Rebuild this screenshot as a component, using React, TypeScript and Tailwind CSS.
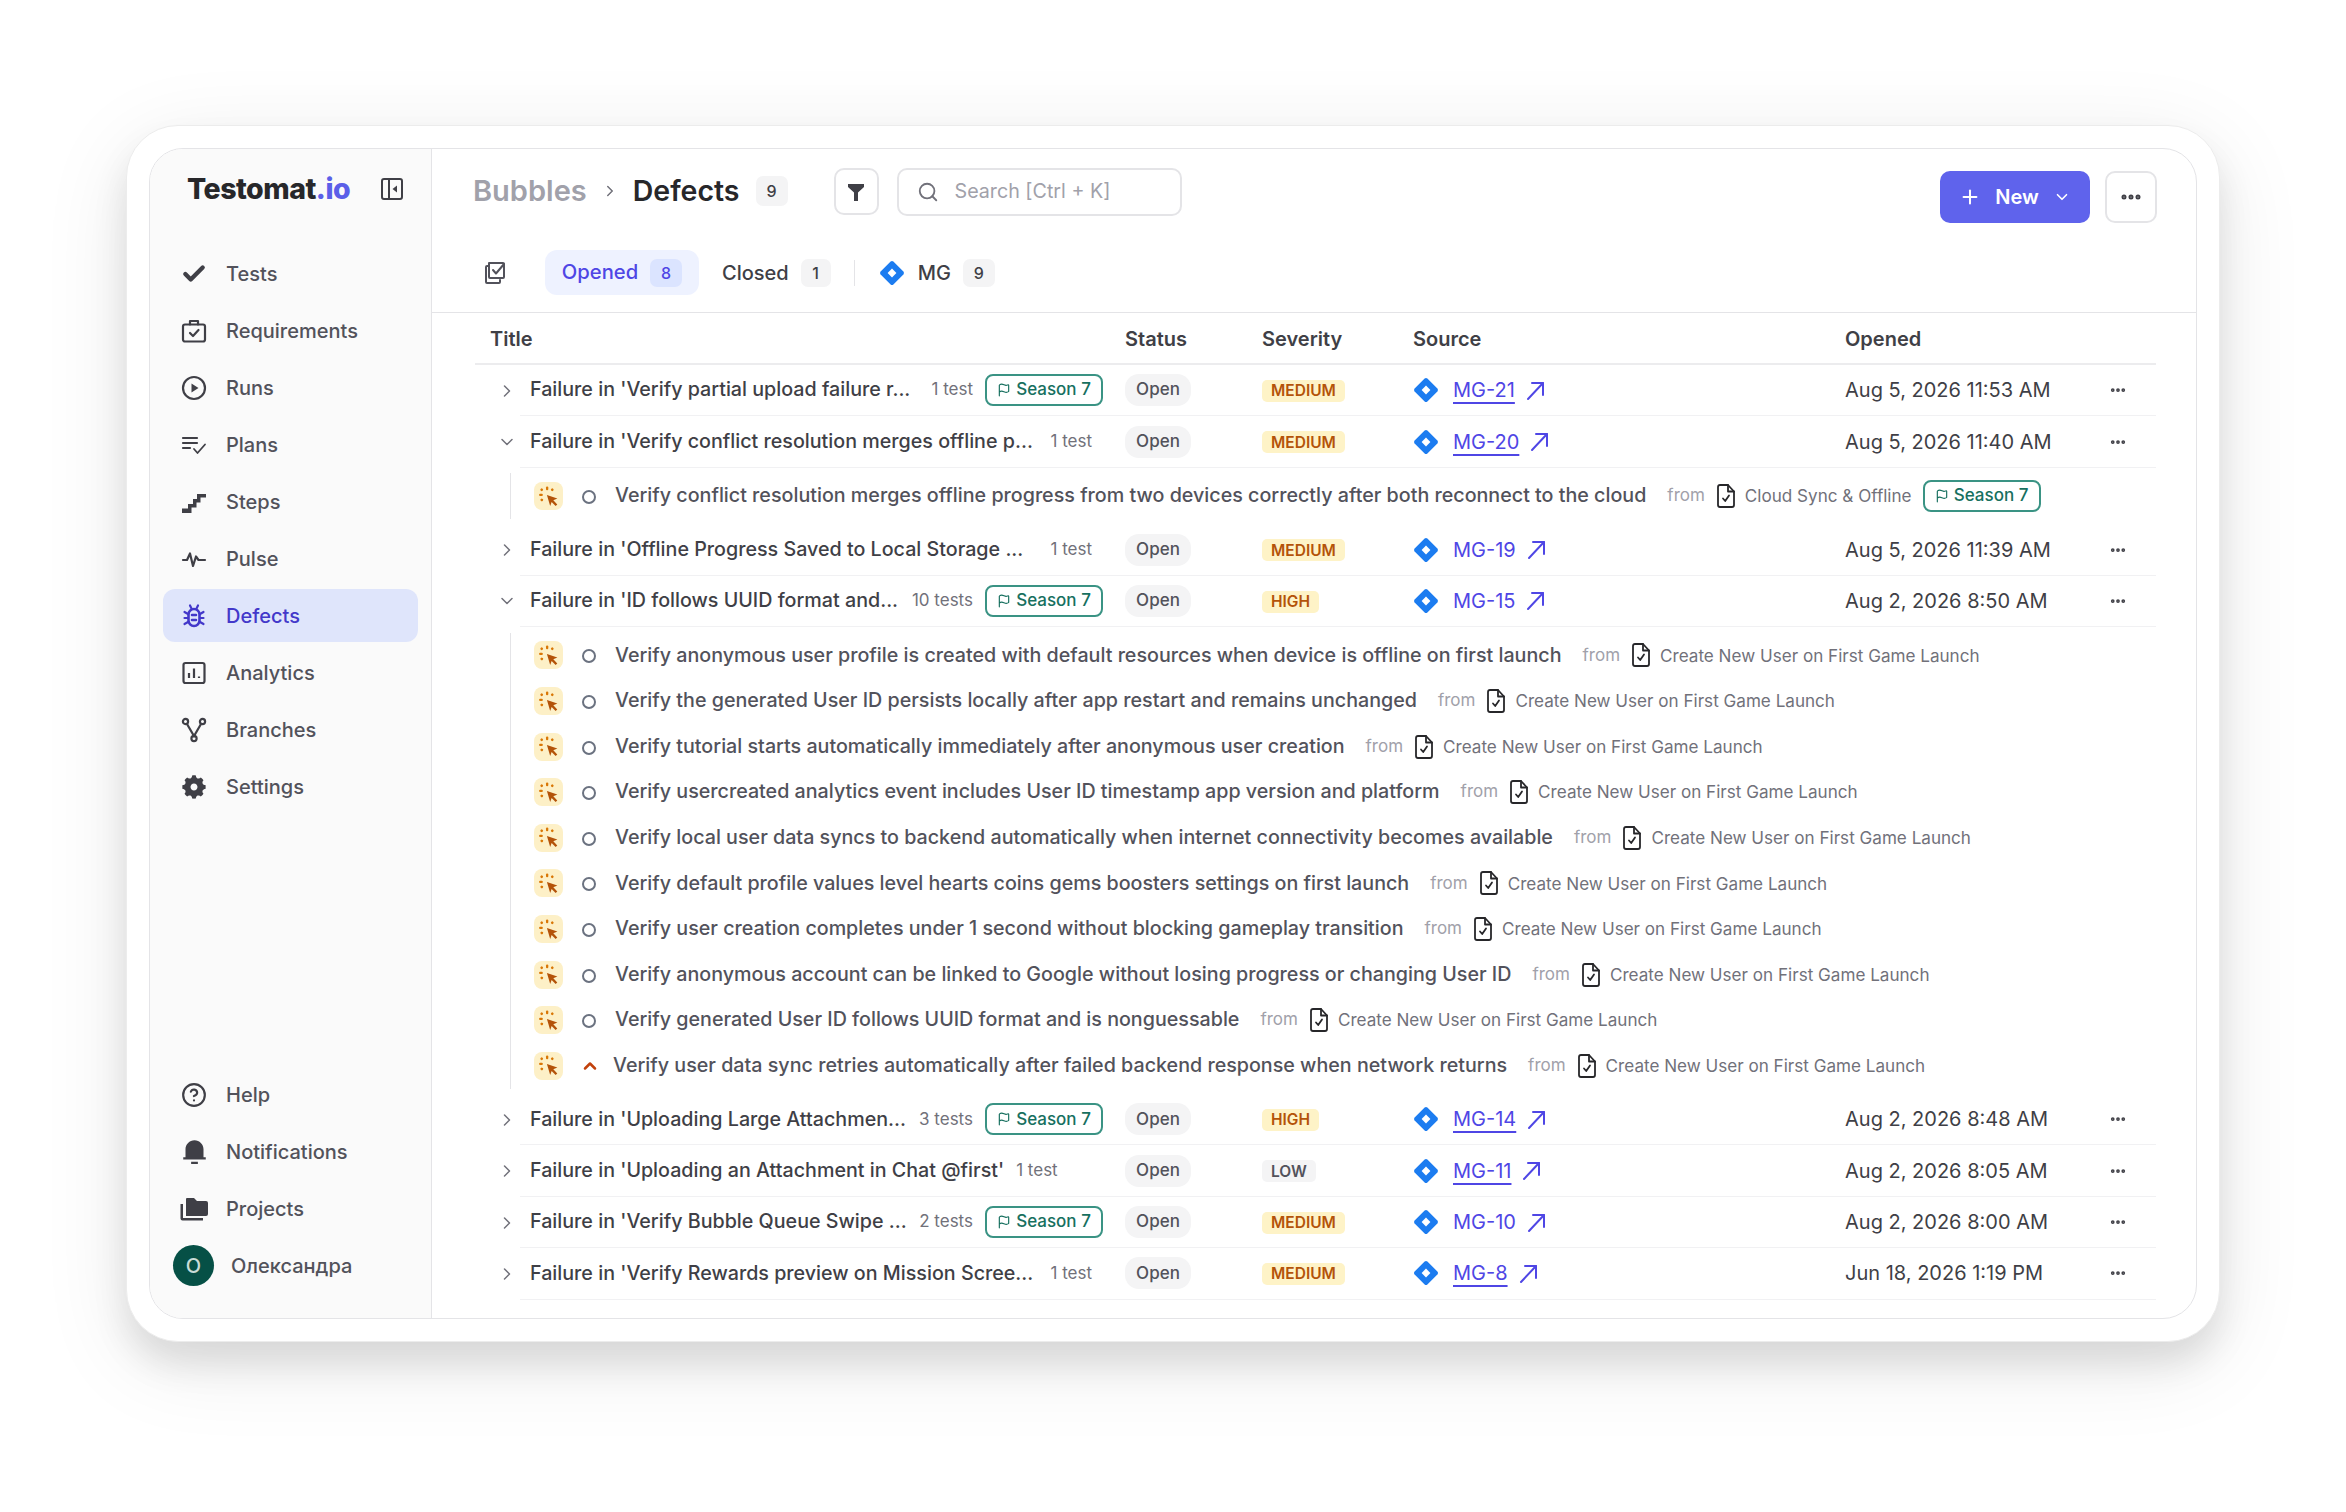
import React from 'react';
import { Check, CircleHelp, ChevronRight, ChevronDown, ChevronUp, Plus, Search, Ellipsis, Flag } from 'lucide-react';
import { RiNotification3Fill, RiSettings5Fill } from 'react-icons/ri';

type Defect = {
  title: string;
  tests: string;
  tag?: boolean;
  tight?: boolean;
  severity: 'MEDIUM' | 'HIGH' | 'LOW';
  source: string;
  underline: boolean;
  opened: string;
  open?: boolean;
  subs?: { title: string; from: string; tag?: boolean; last?: boolean }[];
};

const launch = 'Create New User on First Game Launch';

const defects: Defect[] = [
  { title: "Failure in 'Verify partial upload failure r...", tests: '1 test', tag: true, severity: 'MEDIUM', source: 'MG-21', underline: true, opened: 'Aug 5, 2026 11:53 AM' },
  {
    title: "Failure in 'Verify conflict resolution merges offline p...", tests: '1 test', severity: 'MEDIUM', source: 'MG-20', underline: true, opened: 'Aug 5, 2026 11:40 AM', open: true,
    subs: [{ title: 'Verify conflict resolution merges offline progress from two devices correctly after both reconnect to the cloud', from: 'Cloud Sync & Offline', tag: true }],
  },
  { title: "Failure in 'Offline Progress Saved to Local Storage ...", tests: '1 test', severity: 'MEDIUM', source: 'MG-19', underline: false, opened: 'Aug 5, 2026 11:39 AM' },
  {
    title: "Failure in 'ID follows UUID format and...", tests: '10 tests', tag: true, severity: 'HIGH', source: 'MG-15', underline: false, opened: 'Aug 2, 2026 8:50 AM', open: true,
    subs: [
      { title: 'Verify anonymous user profile is created with default resources when device is offline on first launch', from: launch },
      { title: 'Verify the generated User ID persists locally after app restart and remains unchanged', from: launch },
      { title: 'Verify tutorial starts automatically immediately after anonymous user creation', from: launch },
      { title: 'Verify usercreated analytics event includes User ID timestamp app version and platform', from: launch },
      { title: 'Verify local user data syncs to backend automatically when internet connectivity becomes available', from: launch },
      { title: 'Verify default profile values level hearts coins gems boosters settings on first launch', from: launch },
      { title: 'Verify user creation completes under 1 second without blocking gameplay transition', from: launch },
      { title: 'Verify anonymous account can be linked to Google without losing progress or changing User ID', from: launch },
      { title: 'Verify generated User ID follows UUID format and is nonguessable', from: launch },
      { title: 'Verify user data sync retries automatically after failed backend response when network returns', from: launch, last: true },
    ],
  },
  { title: "Failure in 'Uploading Large Attachmen...", tests: '3 tests', tag: true, severity: 'HIGH', source: 'MG-14', underline: true, opened: 'Aug 2, 2026 8:48 AM' },
  { title: "Failure in 'Uploading an Attachment in Chat @first'", tests: '1 test', tight: true, severity: 'LOW', source: 'MG-11', underline: true, opened: 'Aug 2, 2026 8:05 AM' },
  { title: "Failure in 'Verify Bubble Queue Swipe ...", tests: '2 tests', tag: true, severity: 'MEDIUM', source: 'MG-10', underline: false, opened: 'Aug 2, 2026 8:00 AM' },
  { title: "Failure in 'Verify Rewards preview on Mission Scree...", tests: '1 test', severity: 'MEDIUM', source: 'MG-8', underline: true, opened: 'Jun 18, 2026 1:19 PM' },
];

const JiraIcon = ({ size = 26 }: { size?: number }) => (
  <svg width={size} height={size} viewBox="0 0 26 26" className="shrink-0">
    <path d="M11.6 1.6 Q13 0.4 14.4 1.6 L24.4 11.6 Q25.6 13 24.4 14.4 L14.4 24.4 Q13 25.6 11.6 24.4 L1.6 14.4 Q0.4 13 1.6 11.6 Z" fill="#1c7cf0" />
    <path d="M13 8.6 L17.4 13 L13 17.4 L8.6 13 Z" fill="#fff" />
  </svg>
);

const ExternalArrow = () => (
  <svg width="21" height="21" viewBox="0 0 21 21" fill="none" stroke="#4f46e5" strokeWidth="2" strokeLinecap="round" strokeLinejoin="round" className="ml-[10px] shrink-0">
    <path d="M3 19 L18 3" />
    <path d="M7 3 H18 V15" />
  </svg>
);

const ClickIcon = () => (
  <div className="w-[29px] h-[28px] rounded-[8px] bg-[#fdf0c7] flex items-center justify-center shrink-0">
    <svg width="23" height="23" viewBox="0 0 22 22" fill="#b45309">
      <path d="M9.5 9.5 L19.5 13 L15.6 14.6 L19.4 18.6 L17.8 20 L14 16.2 L12.6 20 Z" />
      <rect x="8.6" y="1.5" width="2.2" height="3.6" rx="1" fill="#d97706" />
      <rect x="2" y="8.4" width="3.6" height="2.2" rx="1" fill="#d97706" />
      <rect x="3.3" y="3.3" width="2.5" height="2.5" rx="1.1" transform="rotate(45 4.5 4.5)" fill="#d97706" />
      <rect x="13.4" y="3.3" width="2.5" height="2.5" rx="1.1" transform="rotate(45 14.6 4.5)" fill="#d97706" />
      <rect x="3.4" y="13" width="2.5" height="2.5" rx="1.1" transform="rotate(45 4.6 14.2)" fill="#d97706" />
    </svg>
  </div>
);

const DocIcon = () => (
  <svg width="20" height="26" viewBox="0 0 20 26" fill="none" stroke="#27272a" strokeWidth="1.8" strokeLinejoin="round" strokeLinecap="round" className="shrink-0">
    <path d="M4 2 H12 L18 8.5 V22 Q18 24 16 24 H4 Q2 24 2 22 V4 Q2 2 4 2 Z" />
    <path d="M12 2 V8.5 H18" />
    <path d="M7 15.5 L9.2 18 L13 12.5" />
  </svg>
);

const SeasonTag = () => (
  <span className="inline-flex items-center justify-center gap-[5px] w-[118px] h-[32px] rounded-[8px] border-2 border-[#3a9384] text-[#17705f] text-[17px] font-medium shrink-0">
    <Flag size={14} strokeWidth={2} />
    Season 7
  </span>
);

const severityClass = {
  MEDIUM: 'bg-[#fef3c7] text-[#b45309]',
  HIGH: 'bg-[#fef3c7] text-[#b45309]',
  LOW: 'bg-[#f4f4f5] text-[#52525b]',
};

const navIconClass = 'w-[26px] h-[26px] flex items-center justify-center [&>svg]:shrink-0';

const navTop = [
  { label: 'Tests', icon: <Check size={26} strokeWidth={4} /> },
  {
    label: 'Requirements',
    icon: (
      <svg width="26" height="26" viewBox="0 0 26 26" fill="none" stroke="currentColor" strokeWidth="2.2" strokeLinejoin="round" strokeLinecap="round">
        <rect x="2" y="6.5" width="22" height="17" rx="2" />
        <path d="M9 6.5 V3 H17 V6.5" />
        <path d="M9 15 L12 18 L17.5 12" />
      </svg>
    ),
  },
  {
    label: 'Runs',
    icon: (
      <svg width="26" height="26" viewBox="0 0 26 26" fill="none" stroke="currentColor" strokeWidth="2.2">
        <circle cx="13" cy="13" r="11" />
        <path d="M10.5 8.5 L17.5 13 L10.5 17.5 Z" fill="currentColor" stroke="none" />
      </svg>
    ),
  },
  {
    label: 'Plans',
    icon: (
      <svg width="26" height="26" viewBox="0 0 26 26" fill="none" stroke="currentColor" strokeWidth="2.2" strokeLinecap="round" strokeLinejoin="round">
        <path d="M2 6 H16 M2 11 H16 M2 16 H9" />
        <path d="M13 17 L16.5 21 L24 12.5" strokeWidth="1.8" />
      </svg>
    ),
  },
  {
    label: 'Steps',
    icon: (
      <svg width="26" height="26" viewBox="0 0 26 26" fill="currentColor">
        <path d="M1 24 V19.5 H7 V15 H12 V10 H16 V5 H25 V8.5 H19.5 V13.5 H15.5 V18.5 H10.5 V24 Z" />
      </svg>
    ),
  },
  {
    label: 'Pulse',
    icon: (
      <svg width="26" height="26" viewBox="0 0 26 26" fill="none" stroke="currentColor" strokeWidth="2.2" strokeLinecap="round" strokeLinejoin="round">
        <path d="M2 14 H6 L9 7.5 L12 20 L15 10.5 L17.5 14 H24" />
      </svg>
    ),
  },
  {
    label: 'Defects',
    active: true,
    icon: (
      <svg width="26" height="26" viewBox="0 0 26 26" fill="none" stroke="currentColor" strokeWidth="2.6" strokeLinecap="round">
        <rect x="7.5" y="6" width="11" height="17" rx="5.5" />
        <path d="M11 12 H15 M11 17 H15" />
        <path d="M9 2.5 L10.5 5.5 M17 2.5 L15.5 5.5 M3.5 9 L7 11 M22.5 9 L19 11 M3.5 15 H7 M22.5 15 H19 M3.5 21 L7 19 M22.5 21 L19 19" strokeWidth="2.2" />
      </svg>
    ),
  },
  {
    label: 'Analytics',
    icon: (
      <svg width="26" height="26" viewBox="0 0 26 26" fill="none" stroke="currentColor" strokeWidth="2.2">
        <rect x="2.5" y="3" width="21" height="20" rx="2" />
        <path d="M8 18 V13 M13 18 V8.5 M18 18 V16.5" />
      </svg>
    ),
  },
  {
    label: 'Branches',
    icon: (
      <svg width="26" height="26" viewBox="0 0 26 26" fill="none" stroke="currentColor" strokeWidth="2.2" strokeLinecap="round">
        <circle cx="4.5" cy="4.5" r="2.6" />
        <circle cx="21.5" cy="4.5" r="2.6" />
        <circle cx="13" cy="21.5" r="2.6" />
        <path d="M6 7 L13 19 L20 7" />
      </svg>
    ),
  },
  { label: 'Settings', icon: <RiSettings5Fill size={28} /> },
];

const navBottom = [
  { label: 'Help', icon: <CircleHelp size={26} strokeWidth={2} /> },
  { label: 'Notifications', icon: <RiNotification3Fill size={27} /> },
  {
    label: 'Projects',
    icon: (
      <svg width="30" height="26" viewBox="0 0 30 26" fill="currentColor">
        <path d="M7 3 Q7 2 8 2 H15 L18 5 H27 Q29 5 29 7 V18 Q29 20 27 20 H7 Z" />
        <path d="M1.5 8 H4 V22 H24 V24.5 H3.5 Q1.5 24.5 1.5 22.5 Z" />
      </svg>
    ),
  },
];

const NavItem = ({ label, icon, active }: { label: string; icon: React.ReactNode; active?: boolean }) => (
  <div className={`h-[53px] rounded-[12px] flex items-center pl-[18px] gap-[19px] text-[20px] font-medium ${active ? 'bg-[#dfe5fb] text-[#4338ca]' : 'text-[#52525b]'}`}>
    <span className={`${navIconClass} ${active ? 'text-[#4338ca]' : 'text-[#3f3f46]'}`}>{icon}</span>
    {label}
  </div>
);

const Sidebar = () => (
  <aside className="w-[282px] shrink-0 bg-[#fafafa] border-r border-[#e4e4e7] flex flex-col pb-[26px]">
    <div className="h-[80px] pl-[37px] pr-[28px] flex items-center justify-between">
      <span className="text-[28.5px] font-extrabold tracking-[-0.5px] text-[#27272a]">
        Testomat<span className="text-[#5b5fe8]">.io</span>
      </span>
      <svg width="22" height="22" viewBox="0 0 22 22" fill="none" stroke="#3f3f46" strokeWidth="2">
        <rect x="1" y="1" width="20" height="20" rx="2" />
        <path d="M8 1 V21" />
        <path d="M16 7.5 L11.5 11 L16 14.5 Z" fill="#3f3f46" stroke="none" />
      </svg>
    </div>
    <nav className="mt-[18px] pl-[13px] pr-[13px] flex flex-col gap-[4px]">
      {navTop.map(item => (
        <NavItem key={item.label} {...item} />
      ))}
    </nav>
    <div className="mt-auto pl-[13px] pr-[13px] flex flex-col gap-[4px]">
      {navBottom.map(item => (
        <NavItem key={item.label} {...item} />
      ))}
      <div className="h-[53px] flex items-center pl-[10px] gap-[17px] text-[20px] font-medium text-[#52525b]">
        <span className="w-[41px] h-[41px] rounded-full bg-[#065046] text-[#c9dcd7] flex items-center justify-center">O</span>
        Олександра
      </div>
    </div>
  </aside>
);

const Count = ({ value, className }: { value: number; className: string }) => (
  <span className={`h-[28px] rounded-[7px] flex items-center justify-center text-[16px] font-medium ${className}`}>{value}</span>
);

const Header = () => (
  <header className="h-[101px] pl-[41px] pr-[39px] flex justify-between">
    <div className="flex items-start pt-[19px]">
      <div className="h-[46px] flex items-center">
        <span className="text-[29px] font-semibold text-[#a1a1aa]">Bubbles</span>
        <ChevronRight size={18} className="text-[#71717a] mx-[14px]" />
        <span className="text-[28.5px] font-semibold text-[#27272a]">Defects</span>
        <Count value={9} className="ml-[16px] w-[32px] h-[30px] bg-[#f4f4f5] text-[#3f3f46]" />
      </div>
      <button className="ml-[46px] w-[45px] h-[47px] rounded-[10px] border-2 border-[#e4e4e7] flex items-center justify-center text-[#3f3f46]">
        <svg width="18" height="20" viewBox="0 0 18 20" fill="currentColor">
          <path d="M1 2 H17 V5 L11 10.5 V19 H7 V10.5 L1 5 Z" />
        </svg>
      </button>
      <div className="ml-[18px] w-[285px] h-[48px] rounded-[10px] border-2 border-[#e4e4e7] flex items-center pl-[18px] gap-[16px] text-[19.7px] text-[#a1a1aa]">
        <Search size={22} className="text-[#71717a]" />
        Search [Ctrl + K]
      </div>
    </div>
    <div className="flex items-start pt-[22px] gap-[15px]">
      <button className="w-[150px] h-[52px] rounded-[10px] bg-[#5f63ec] text-white flex items-center justify-center gap-[14px] text-[20px] font-semibold">
        <Plus size={22} strokeWidth={2.2} />
        New
        <ChevronDown size={18} strokeWidth={2.2} />
      </button>
      <button className="w-[52px] h-[52px] rounded-[10px] border-2 border-[#e4e4e7] flex items-center justify-center text-[#3f3f46]">
        <Ellipsis size={24} strokeWidth={3} />
      </button>
    </div>
  </header>
);

const Tabs = () => (
  <div className="h-[63px] border-b border-[#e4e4e7] pl-[52px] flex items-start">
    <svg width="22" height="24" viewBox="0 0 22 24" fill="none" stroke="#52525b" strokeWidth="2" strokeLinecap="round" strokeLinejoin="round" className="mt-[11px]">
      <path d="M5 5 H3 Q2 5 2 6 V21 Q2 22 3 22 H15 Q16 22 16 21 V19" />
      <path d="M5 2 H19 Q20 2 20 3 V16 Q20 17 19 17 H6 Q5 17 5 16 Z" />
      <path d="M9 9 L12 12.5 L20 3" />
    </svg>
    <div className="ml-[39px] w-[154px] h-[45px] rounded-[12px] bg-[#eef2ff] flex items-center justify-center gap-[12px] text-[20.2px] font-medium text-[#4f46e5]">
      Opened
      <Count value={8} className="w-[32px] bg-[#dbe4ff] text-[#4f46e5]" />
    </div>
    <div className="ml-[23px] h-[45px] flex items-center gap-[12px] text-[20px] font-medium text-[#3f3f46]">
      Closed
      <Count value={1} className="w-[30px] bg-[#f4f4f5] text-[#3f3f46]" />
    </div>
    <div className="ml-[23px] mt-[10px] w-px h-[26px] bg-[#e4e4e7]" />
    <div className="ml-[24px] h-[45px] flex items-center text-[20px] font-medium text-[#3f3f46]">
      <JiraIcon />
      <span className="ml-[13px]">MG</span>
      <Count value={9} className="ml-[12px] w-[32px] bg-[#f4f4f5] text-[#3f3f46]" />
    </div>
  </div>
);

const rowGrid = 'grid grid-cols-[605px_137px_151px_432px_1fr_56px] items-center';

const Row = ({ d }: { d: Defect }) => (
  <div className="flex h-[51.4px]">
    <div className="w-[45px] flex items-center justify-center pl-[18px] text-[#71717a]">
      {d.open ? <ChevronDown size={20} strokeWidth={1.8} /> : <ChevronRight size={20} strokeWidth={1.8} />}
    </div>
    <div className={`flex-1 border-b border-[#f1f1f3] ${rowGrid}`}>
      <div className={`pl-[10px] flex items-center whitespace-nowrap ${d.tag ? 'pr-[22px]' : 'pr-[33px]'}`}>
        <span className="text-[19.7px] font-medium text-[#3f3f46]">{d.title}</span>
        <span className={`text-[17px] text-[#71717a] ${d.tight ? 'ml-[12px]' : 'ml-auto'}`}>{d.tests}</span>
        {d.tag && <span className="ml-[12px]"><SeasonTag /></span>}
      </div>
      <div>
        <span className="inline-flex items-center justify-center w-[66px] h-[32px] rounded-[14px] bg-[#f4f4f5] text-[17px] font-medium text-[#52525b]">Open</span>
      </div>
      <div>
        <span className={`inline-flex items-center h-[22px] px-[9px] rounded-[5px] text-[15.5px] leading-none font-semibold ${severityClass[d.severity]}`}>{d.severity}</span>
      </div>
      <div className="flex items-center">
        <JiraIcon />
        <span className={`ml-[14px] text-[20px] text-[#4f46e5] ${d.underline ? 'underline underline-offset-[5px]' : ''}`}>{d.source}</span>
        <ExternalArrow />
      </div>
      <div className="text-[20px] text-[#3f3f46] whitespace-nowrap">{d.opened}</div>
      <div className="flex justify-start pl-[9px] text-[#3f3f46]">
        <Ellipsis size={18} strokeWidth={3} />
      </div>
    </div>
  </div>
);

const SubRows = ({ subs }: { subs: NonNullable<Defect['subs']> }) => (
  <div className="py-[5.5px] pl-[35px]">
    <div className="border-l border-[#e4e4e7] pl-[23px]">
      {subs.map(s => (
        <div key={s.title} className="h-[45.6px] flex items-center whitespace-nowrap">
          <ClickIcon />
          {s.last ? (
            <span className="w-[52px] flex justify-center pl-[1px] text-[#c2410c] -mr-[2px]">
              <ChevronUp size={20} strokeWidth={3} />
            </span>
          ) : (
            <span className="w-[52px] flex justify-center">
              <span className="w-[14px] h-[14px] mt-[2px] rounded-full border-2 border-[#6b7280]" />
            </span>
          )}
          <span className="text-[19.7px] font-medium text-[#52525b]">{s.title}</span>
          <span className="ml-[21px] text-[17px] text-[#a1a1aa]">from</span>
          <span className="ml-[11px]"><DocIcon /></span>
          <span className="ml-[9px] text-[17.1px] text-[#71717a]">{s.from}</span>
          {s.tag && <span className="ml-[11px]"><SeasonTag /></span>}
        </div>
      ))}
    </div>
  </div>
);

const Table = () => (
  <div className="ml-[43px] mr-[40px]">
    <div className="h-[52px] pt-[2px] border-b-2 border-[#ececee] flex items-center pl-[15px] text-[20px] font-semibold text-[#3f3f46]">
      <div className="w-[635px]">Title</div>
      <div className="w-[137px]">Status</div>
      <div className="w-[151px]">Severity</div>
      <div className="w-[432px]">Source</div>
      <div>Opened</div>
    </div>
    {defects.map(d => (
      <div key={d.source}>
        <Row d={d} />
        {d.subs && <SubRows subs={d.subs} />}
      </div>
    ))}
  </div>
);

export default function App() {
  return (
    <div className="w-[2346px] h-[1512px] bg-white pt-[125px] pl-[126px] font-[Inter,sans-serif] overflow-hidden">
      <div className="w-[2094px] h-[1217px] bg-white rounded-[52px] p-[22px] border border-[#ececec] shadow-[0_22px_34px_rgba(0,0,0,0.10),0_20px_90px_rgba(0,0,0,0.09)]">
        <div className="h-full rounded-[34px] border border-[#e4e4e7] overflow-hidden flex bg-white">
          <Sidebar />
          <main className="flex-1 min-w-0">
            <Header />
            <Tabs />
            <Table />
          </main>
        </div>
      </div>
    </div>
  );
}
